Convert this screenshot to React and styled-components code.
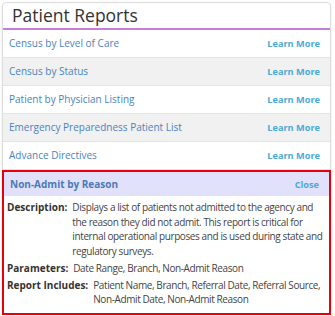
import React from "react";
import styled, { createGlobalStyle } from "styled-components";

const Global = createGlobalStyle`
  html, body { margin: 0; padding: 0; background: #fff; }
  body { font-family: "Open Sans", "Liberation Sans", sans-serif; }
  * { box-sizing: border-box; }
`;

const Page = styled.div`
  padding: 2px 4px 0 2px;
`;

const Card = styled.div`
  border: 1px solid #dcdcdc;
  border-radius: 4px;
  background: #fff;
  box-shadow: 0 1px 2px rgba(0,0,0,0.12);
`;

const Title = styled.h2`
  margin: 0;
  height: 27px;
  padding: 0 0 2px 9px;
  display: flex;
  align-items: center;
  font-size: 17.5px;
  font-weight: 400;
  color: #333;
  border-bottom: 2px solid #c77ed8;
`;

const Row = styled.div`
  display: flex;
  align-items: center;
  justify-content: space-between;
  height: 28px;
  padding: 0 10px 1px 6px;
  background: ${p => (p.$shade ? "#f1f1f1" : "#fff")};
  border-bottom: 1px solid #e4e4e4;
`;

const ReportName = styled.span`
  font-size: 10px;
  color: #4a82bf;
`;

const Action = styled.span`
  font-size: 9.2px;
  font-weight: 700;
  color: #4aaad6;
`;

const Detail = styled.div`
  border: 2px solid #e8000b;
  margin: 0 -1px -1px -1px;
`;

const DetailHead = styled.div`
  display: flex;
  align-items: center;
  justify-content: space-between;
  height: 24px;
  padding: 0 10px 0 6px;
  background: #e2e1fb;
`;

const DetailTitle = styled.span`
  font-size: 10px;
  font-weight: 700;
  color: #4a7bb7;
`;

const DetailBody = styled.div`
  padding: 4px 2px 6px 3px;
  display: flex;
  flex-direction: column;
  gap: 2px;
`;

const Field = styled.div`
  display: flex;
  align-items: baseline;
  gap: 5px;
  font-size: 10px;
  line-height: 14.7px;
  color: #444;
`;

const Label = styled.span`
  font-weight: 700;
  color: #333;
  white-space: nowrap;
`;

const Value = styled.span`
  flex: 1;
  letter-spacing: -0.4px;
`;

const reports = [
  "Census by Level of Care",
  "Census by Status",
  "Patient by Physician Listing",
  "Emergency Preparedness Patient List",
  "Advance Directives",
];

export default function App() {
  return (
    <>
      <Global />
      <Page>
        <Card>
          <Title>Patient Reports</Title>
          {reports.map((r, i) => (
            <Row key={r} $shade={i % 2 === 1}>
              <ReportName>{r}</ReportName>
              <Action>Learn More</Action>
            </Row>
          ))}
          <Detail>
            <DetailHead>
              <DetailTitle>Non-Admit by Reason</DetailTitle>
              <Action>Close</Action>
            </DetailHead>
            <DetailBody>
              <Field>
                <Label>Description:</Label>
                <Value>
                  Displays a list of patients not admitted to the agency and the reason they did not admit. This report is critical for internal operational purposes and is used during state and regulatory surveys.
                </Value>
              </Field>
              <Field>
                <Label>Parameters:</Label>
                <Value>Date Range, Branch, Non-Admit Reason</Value>
              </Field>
              <Field>
                <Label>Report Includes:</Label>
                <Value>Patient Name, Branch, Referral Date, Referral Source, Non-Admit Date, Non-Admit Reason</Value>
              </Field>
            </DetailBody>
          </Detail>
        </Card>
      </Page>
    </>
  );
}
